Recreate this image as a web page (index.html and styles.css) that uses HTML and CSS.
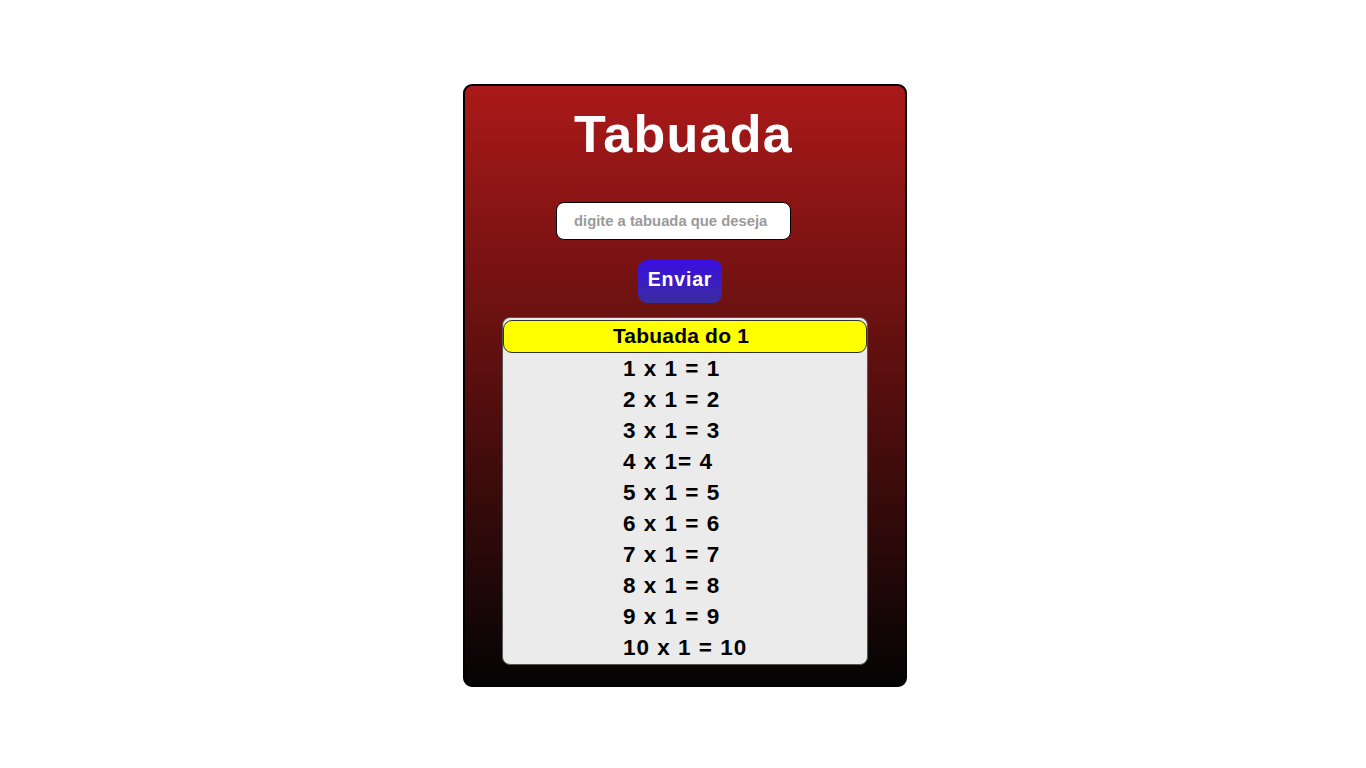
FILE: index.html
```html
<!DOCTYPE html>
<html lang="pt-BR">
<head>
<meta charset="utf-8">
<title>Tabuada</title>
<link rel="stylesheet" href="styles.css">
</head>
<body>
<main class="card">
  <h1 class="title">Tabuada</h1>
  <input class="entry" type="text" placeholder="digite a tabuada que deseja">
  <button class="send" type="button">Enviar</button>
  <section class="result">
    <div class="result-head">Tabuada do 1</div>
    <ul class="lines">
      <li>1 x 1 = 1</li>
      <li>2 x 1 = 2</li>
      <li>3 x 1 = 3</li>
      <li>4 x 1= 4</li>
      <li>5 x 1 = 5</li>
      <li>6 x 1 = 6</li>
      <li>7 x 1 = 7</li>
      <li>8 x 1 = 8</li>
      <li>9 x 1 = 9</li>
      <li>10 x 1 = 10</li>
    </ul>
  </section>
</main>
</body>
</html>
```

FILE: styles.css
```css
html, body {
  margin: 0;
  padding: 0;
  background: #ffffff;
}

body {
  font-family: "Liberation Sans", Arial, sans-serif;
  padding-top: 84px;
  padding-left: 4px;
}

.card {
  box-sizing: border-box;
  width: 444px;
  height: 603px;
  margin: 0 auto;
  border: 2px solid #000;
  border-radius: 9px;
  background: linear-gradient(to bottom, #ab1919 0%, #040404 100%);
  display: flex;
  flex-direction: column;
  align-items: center;
  padding-top: 22px;
}

.title {
  margin: 0 3px 0 0;
  font-size: 52px;
  line-height: 52px;
  font-weight: bold;
  letter-spacing: 1.3px;
  color: #fff;
}

.entry {
  box-sizing: border-box;
  width: 235px;
  height: 38px;
  margin: 42px 23px 0 0;
  border: 1px solid #000;
  border-radius: 8px;
  background: #fff;
  padding: 0 0 0 17px;
  font-family: "Liberation Sans", Arial, sans-serif;
  font-size: 14.8px;
  font-weight: bold;
  outline: none;
}

.entry::placeholder {
  color: #9a9a9a;
}

.send {
  box-sizing: border-box;
  width: 84px;
  height: 43px;
  margin: 20px 10px 0 0;
  border: none;
  border-radius: 9px;
  background: linear-gradient(to bottom, #3a0fe2 0%, #3a2c9e 100%);
  color: #fff;
  font-family: "Liberation Sans", Arial, sans-serif;
  font-size: 19.5px;
  font-weight: bold;
  letter-spacing: 0.8px;
  padding: 0 0 5px 0;
}

.result {
  box-sizing: border-box;
  width: 366px;
  margin-top: 14px;
  border: 1px solid #555;
  border-radius: 8px;
  background: #ebebeb;
  padding: 2px 0 1px 0;
}

.result-head {
  box-sizing: border-box;
  height: 33px;
  border: 1px solid #333;
  border-radius: 9px;
  background: #ffff00;
  color: #000;
  font-size: 21px;
  font-weight: bold;
  letter-spacing: 0.2px;
  text-align: center;
  line-height: 29px;
  padding-right: 8px;
}

.lines {
  list-style: none;
  margin: 0;
  padding: 0 0 0 120px;
}

.lines li {
  font-size: 22.5px;
  line-height: 31px;
  font-weight: bold;
  letter-spacing: 1px;
  color: #000;
}
```
